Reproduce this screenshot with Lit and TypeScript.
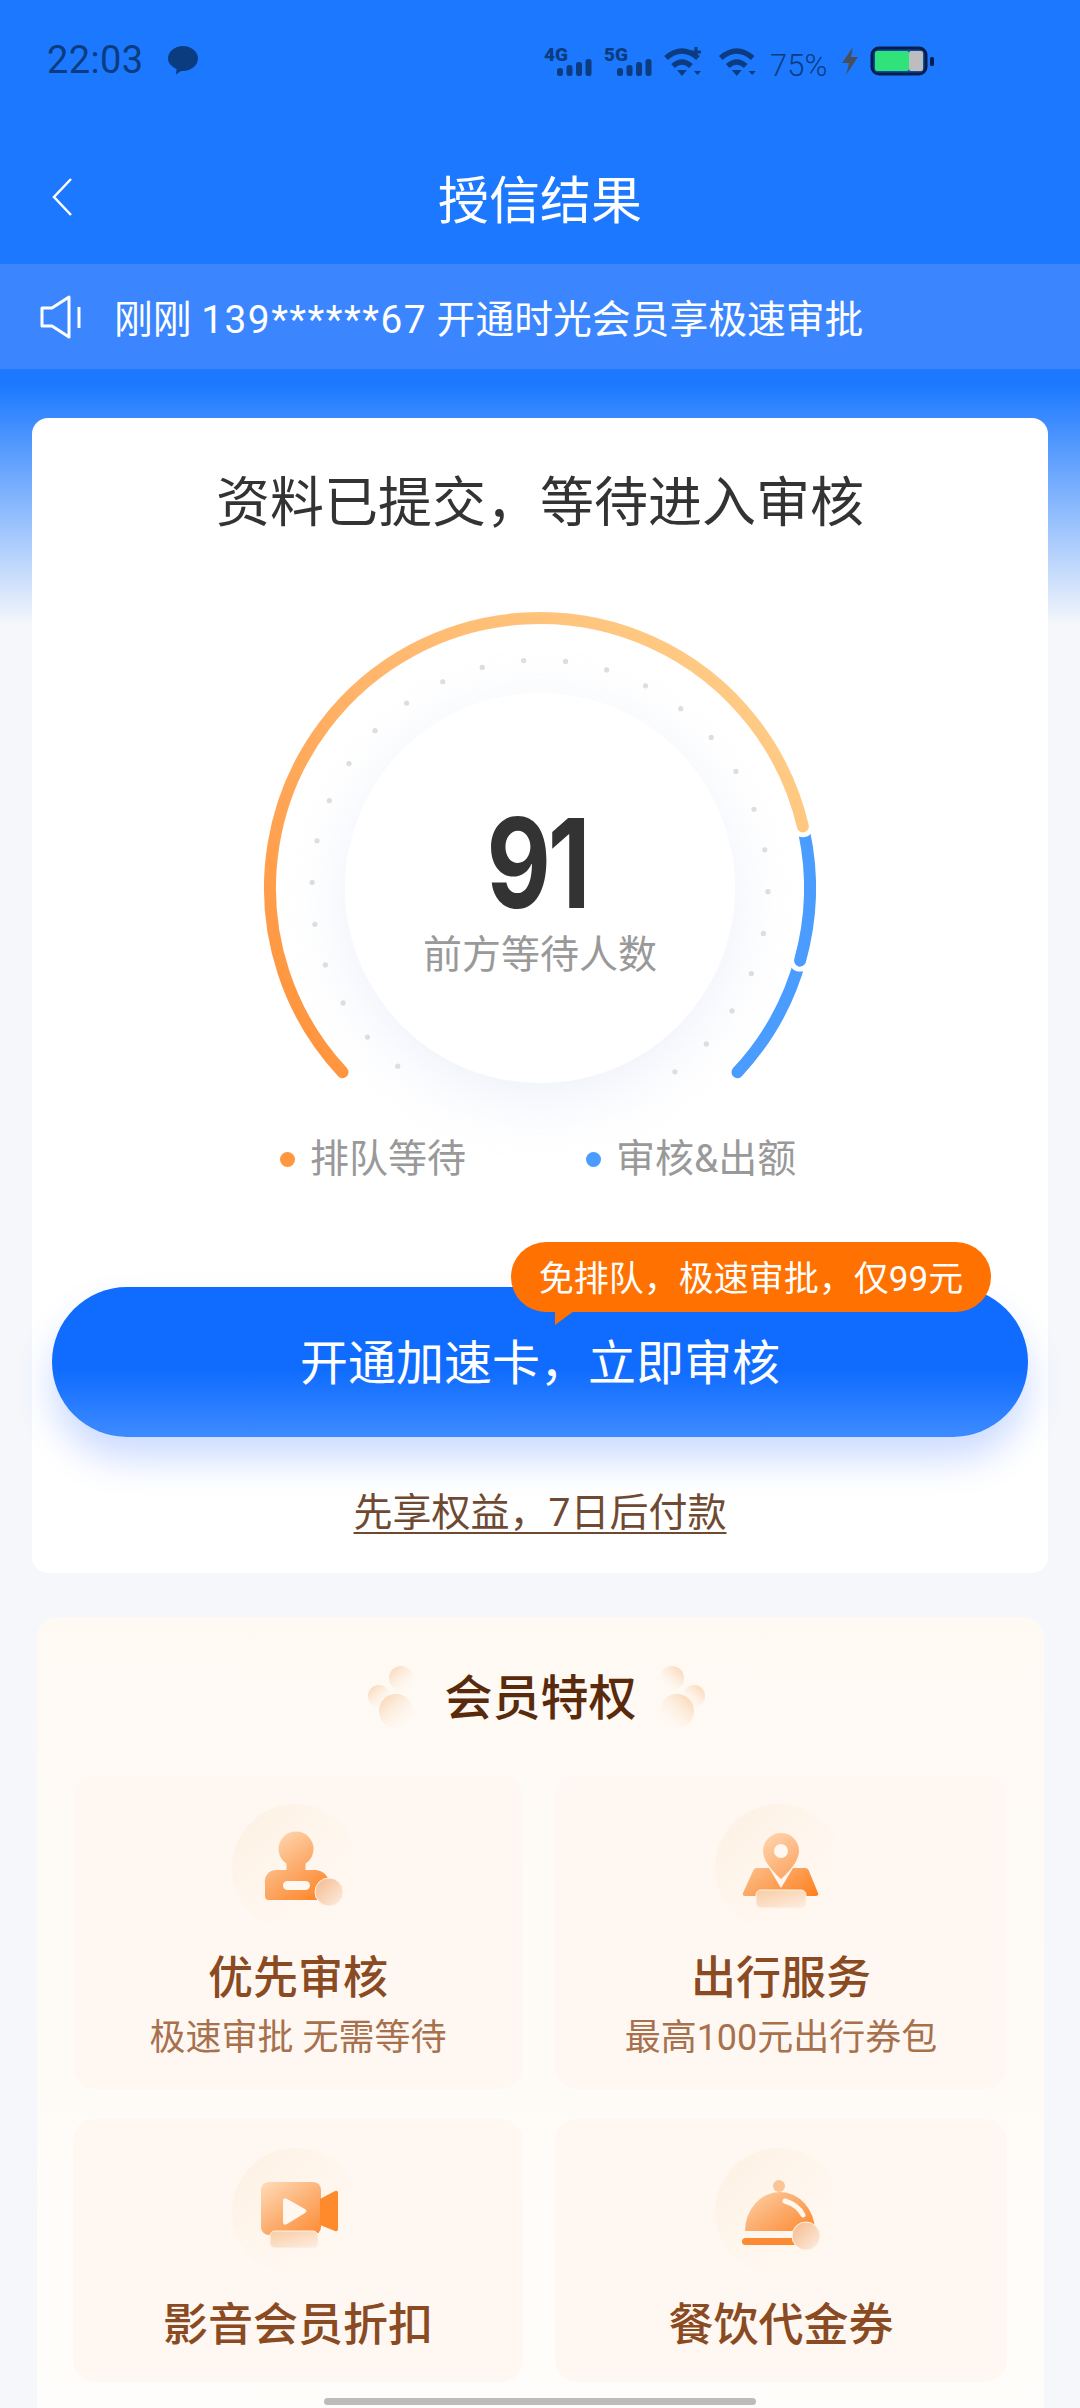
import { LitElement, html, css, svg } from "lit";
import { customElement } from "lit/decorators.js";

const CX = 280, CY = 280;
const pt = (r: number, deg: number) => {
  const a = (deg * Math.PI) / 180;
  return [CX + r * Math.sin(a), CY - r * Math.cos(a)];
};
const arc = (from: number, to: number, r = 270) => {
  const [x1, y1] = pt(r, from);
  const [x2, y2] = pt(r, to);
  return `M${x1.toFixed(2)} ${y1.toFixed(2)}A${r} ${r} 0 ${to - from > 180 ? 1 : 0} 1 ${x2.toFixed(2)} ${y2.toFixed(2)}`;
};
const dots = Array.from({ length: 28 }, (_, i) => pt(228, -141.4 + i * 10.56));

const grads = (p: string) => svg`
  <defs>
    <linearGradient id="${p}a" gradientUnits="userSpaceOnUse" x1="42" y1="28" x2="92" y2="100">
      <stop offset="0" stop-color="#ffd9b4"/><stop offset="0.45" stop-color="#fcae70"/><stop offset="1" stop-color="#ff7f1c"/>
    </linearGradient>
    <linearGradient id="${p}b" x1="0" y1="0" x2="1" y2="1">
      <stop offset="0" stop-color="#f5b98a"/><stop offset="1" stop-color="#fdeee2"/>
    </linearGradient>
    <linearGradient id="${p}c" x1="0.2" y1="0" x2="0.9" y2="1">
      <stop offset="0" stop-color="#f9cfa8"/><stop offset="1" stop-color="#fdece0"/>
    </linearGradient>
    <linearGradient id="${p}g" x1="0" y1="0" x2="1" y2="1">
      <stop offset="0" stop-color="#fdf0e1"/><stop offset="1" stop-color="#fff8f1" stop-opacity="0"/>
    </linearGradient>
  </defs>
  <circle cx="64" cy="64" r="64" fill="url(#${p}g)"/>`;

const personIcon = html`<svg class="ico" viewBox="0 0 128 128">${grads("p")}
  <circle cx="64" cy="45" r="17.5" fill="url(#pa)"/>
  <rect x="54.500" y="56" width="19" height="16" fill="url(#pa)"/>
  <path d="M33 79a11 11 0 0 1 11-13h40a14 14 0 0 1 13 13v17H37a4 4 0 0 1-4-4z" fill="url(#pa)"/>
  <rect x="51" y="77" width="27" height="9" rx="4.5" fill="#fff8f1"/>
  <circle cx="97" cy="88" r="14" fill="url(#pb)" stroke="#fff3e8" stroke-width="1"/>
</svg>`;

const pinIcon = html`<svg class="ico" viewBox="0 0 128 128">${grads("m")}
  <path d="M42 64h12l12 20 12-20h12q3 0 4 3l9 22q1 3-2 3H30q-3 0-2-3l10-22q1-3 4-3z" fill="url(#ma)"/>
  <path d="M66 29a18 18 0 0 1 18 18c0 10-11 22-18 28-7-6-18-18-18-28a18 18 0 0 1 18-18z" fill="url(#ma)" opacity="0.9"/>
  <circle cx="66" cy="47" r="7" fill="#fff8f1"/>
  <rect x="41" y="86" width="50" height="18" rx="5" fill="url(#mc)" stroke="#fff3e8" stroke-width="1"/>
</svg>`;

const videoIcon = html`<svg class="ico" viewBox="0 0 128 128">${grads("v")}
  <rect x="29" y="34" width="60" height="53" rx="8" fill="url(#va)"/>
  <path d="M88 51l15-8q3-1 3 2v36q0 3-3 2l-15-6z" fill="#ff8a2c"/>
  <path d="M51 53q0-4 4-2l18 10q3 2 0 4L55 76q-4 2-4-2z" fill="#fff8f1"/>
  <rect x="38" y="83" width="48" height="17" rx="5" fill="url(#vc)" stroke="#fff3e8" stroke-width="1"/>
</svg>`;

const clocheIcon = html`<svg class="ico" viewBox="0 0 128 128">${grads("c")}
  <circle cx="64" cy="38" r="6" fill="#fbc596"/>
  <path d="M30 83a35 39 0 0 1 70 0z" fill="url(#ca)"/>
  <path d="M70 53q13 4 18 14" fill="none" stroke="#fff8f1" stroke-width="5" stroke-linecap="round"/>
  <rect x="27" y="90" width="60" height="7" rx="3.5" fill="#fb8a33"/>
  <circle cx="91" cy="88" r="14" fill="url(#cb)" stroke="#fff3e8" stroke-width="1"/>
</svg>`;

const flank = (id: string, cls: string) => html`<svg class="flank ${cls}" viewBox="0 0 48 64">
  <defs>
    <linearGradient id="${id}" x1="0.1" y1="0.1" x2="0.85" y2="0.95">
      <stop offset="0" stop-color="#fbd7b6"/><stop offset="1" stop-color="#fef8f1" stop-opacity="0"/>
    </linearGradient>
  </defs>
  <circle cx="34" cy="13" r="12" fill="url(#${id})"/>
  <circle cx="12" cy="31" r="11" fill="url(#${id})"/>
  <circle cx="29" cy="46" r="17" fill="url(#${id})"/>
</svg>`;

const wifi = (dx: number) => svg`
  <g transform="translate(${dx} 0)" fill="none" stroke="#0b3c80" stroke-width="5.500">
    <path d="M125 14Q141 0 157 14"/>
    <path d="M132 22Q141 14 150 22"/>
    <path d="M136 26h10l-5 6z" fill="#0b3c80" stroke="none"/>
    <path d="M153 27h7l-3.500 4z" fill="#0b3c80" stroke="none"/>
  </g>`;

const signal = (dx: number, label: string) => svg`
  <g transform="translate(${dx} 0)" fill="#0b3c80">
    <text x="3" y="17" class="net">${label}</text>
    <rect x="16" y="24" width="6" height="8" rx="2.5"/>
    <rect x="25.5" y="21" width="6" height="11" rx="2.5"/>
    <rect x="35" y="18" width="6" height="14" rx="2.5"/>
    <rect x="44.5" y="15" width="6" height="17" rx="2.5"/>
  </g>`;

@customElement("app-root")
export class AppRoot extends LitElement {
  static styles = css`
    :host {
      display: block;
      position: relative;
      width: 1080px;
      height: 2408px;
      overflow: hidden;
      background: linear-gradient(#1c79ff 0, #1c79ff 385px, #f5f7fb 625px);
      font-family: Roboto, "Noto Sans CJK SC", sans-serif;
      color: #333;
    }
    .status {
      height: 120px;
      display: flex;
      align-items: center;
      justify-content: space-between;
      padding: 0 144px 0 47px;
    }
    .time-wrap { display: flex; align-items: center; gap: 23px; }
    .time { font-size: 38px; font-weight: 400; color: #0b3c80; letter-spacing: 0.4px; }
    .bubble { width: 32px; height: 30px; display: block; }
    .sys { width: 395px; height: 34px; display: block; overflow: visible; margin-top: 1px; }
    .net { font-size: 19px; font-weight: 900; font-family: Roboto, sans-serif; }
    .pct { font-size: 31px; font-weight: 300; font-family: Roboto, sans-serif; fill: #0b3c80; }
    .nav {
      height: 144px;
      padding-top: 10px;
      box-sizing: border-box;
      display: flex;
      align-items: center;
      justify-content: center;
      position: relative;
      color: #fff;
      font-size: 51px;
    }
    .back { position: absolute; left: 50px; top: 57px; width: 24px; height: 40px; }
    .banner {
      height: 105px;
      background: #3b86ff;
      display: flex;
      align-items: center;
      padding-left: 40px;
      gap: 30px;
      color: #fff;
      font-size: 38.8px;
    }
    .banner > span { margin-top: -2px; }
    .lat { letter-spacing: 1.5px; }
    .spk { width: 44px; height: 46px; display: block; }
    .card {
      margin: 49px 32px 0;
      height: 1155px;
      background: #fff;
      border-radius: 16px;
      display: flex;
      flex-direction: column;
      align-items: center;
    }
    .card-title { margin-top: 58px; font-size: 54px; line-height: 56px; color: #333; }
    .gauge { position: relative; width: 560px; height: 500px; margin-top: 76px; }
    .gauge svg { position: absolute; inset: 0; width: 560px; height: 560px; overflow: visible; }
    .inner {
      position: absolute;
      left: 85px;
      top: 85px;
      width: 390px;
      height: 390px;
      border-radius: 50%;
      background: #fff;
      box-shadow: 0 16px 60px rgba(214, 224, 243, 0.45);
      display: flex;
      flex-direction: column;
      align-items: center;
      padding-top: 120px;
      box-sizing: border-box;
    }
    .num {
      font-family: Inter, Roboto, sans-serif;
      font-size: 124px;
      line-height: 100px;
      font-weight: 700;
      letter-spacing: -4px;
      transform: scaleX(0.8);
      margin-left: -6px;
      color: #333;
    }
    .num-label { margin-top: 17px; font-size: 39px; line-height: 50px; color: #999; }
    .legend {
      margin-top: 27px;
      display: flex;
      width: 520px;
      font-size: 39px;
      line-height: 48px;
      color: #999;
    }
    .leg { display: flex; align-items: center; gap: 15px; }
    .leg.one { width: 306px; }
    .dot { width: 15px; height: 15px; border-radius: 50%; }
    .dot.o { background: #ff9640; }
    .dot.b { background: #4a9cff; }
    .cta {
      margin-top: 104px;
      position: relative;
      width: 976px;
      height: 150px;
      flex: none;
      border-radius: 75px;
      background: linear-gradient(#0f6cff 0, #0f6cff 55%, #3e8bff 100%);
      box-shadow: 0 22px 36px rgba(40, 105, 255, 0.24);
      display: flex;
      align-items: center;
      justify-content: center;
      color: #fff;
      font-size: 48px;
      padding-bottom: 6px;
      box-sizing: border-box;
    }
    .tip {
      position: absolute;
      left: 459px;
      top: -45px;
      width: 480px;
      height: 70px;
      border-radius: 35px;
      background: #ff7100;
      display: flex;
      align-items: center;
      justify-content: center;
      font-size: 35px;
      color: #fff;
      padding-bottom: 3px;
      box-sizing: border-box;
    }
    .tip::after {
      content: "";
      position: absolute;
      left: 44px;
      top: 69px;
      width: 19px;
      height: 14px;
      background: #ff7100;
      clip-path: polygon(0 0, 100% 0, 0 100%);
    }
    .link {
      margin-top: 51px;
      font-size: 39px;
      line-height: 50px;
      color: #6f4a33;
      text-decoration: underline;
      text-underline-offset: 6px;
      text-decoration-thickness: 2px;
    }
    .perks {
      margin: 44px 36px 0 37px;
      height: 820px;
      border-radius: 20px;
      background: linear-gradient(#fef9f3, #fffdfb);
      padding: 50px 36px 0;
      box-sizing: border-box;
    }
    .perks-title {
      display: flex;
      align-items: center;
      justify-content: center;
      gap: 29px;
      height: 60px;
      font-size: 48px;
      font-weight: 500;
      color: #5a2a0c;
    }
    .perks-title span { margin-top: -6px; }
    .flank { width: 48px; height: 64px; display: block; }
    .flank.r { transform: translateX(-8px) scaleX(-1); }
    .grid {
      margin-top: 48px;
      display: grid;
      grid-template-columns: 450px 452px;
      grid-template-rows: 314px 263px;
      column-gap: 32px;
      row-gap: 30px;
    }
    .item {
      border-radius: 22px;
      background: #fff8f2;
      display: flex;
      flex-direction: column;
      align-items: center;
      padding-top: 29px;
      box-sizing: border-box;
    }
    .ico { width: 128px; height: 128px; display: block; flex: none; margin-left: -4px; }
    .item-t { margin-top: 17px; font-size: 45px; line-height: 60px; font-weight: 500; color: #8a4a22; }
    .item-t.low { margin-top: 20px; }
    .item-s { margin-top: 4px; font-size: 36px; line-height: 50px; color: #a8714d; }
    .home {
      position: absolute;
      left: 324px;
      bottom: 3px;
      width: 432px;
      height: 7px;
      border-radius: 4px;
      background: #bcbcbc;
    }
  `;

  render() {
    return html`
      <div class="status">
        <div class="time-wrap">
          <span class="time">22:03</span>
          <svg class="bubble" viewBox="0 0 32 30">
            <path d="M16 1c8.300 0 15 5.600 15 12.500S24.300 26 16 26q-1 0-2-.1L9 29.500l.6-5.500C3.800 21.300 1 17.700 1 13.500 1 6.600 7.700 1 16 1z" fill="#0b3c80"/>
          </svg>
        </div>
        <svg class="sys" viewBox="0 0 395 34">
          ${signal(0, "4G")}${signal(60, "5G")}${wifi(0)}
          <path d="M150 8h10M155 3v10" stroke="#0b3c80" stroke-width="3" fill="none"/>
          ${wifi(54.7)}
          <text x="229" y="32" class="pct">75%</text>
          <path d="M312 3L301 19h7l-3 12 12-18h-7z" fill="#46505c"/>
          <rect x="331" y="4" width="54" height="26" rx="7" fill="#0c4ea8" stroke="#081e4a" stroke-width="3"/>
          <rect x="334" y="7" width="34" height="20" rx="2" fill="#2fe27a"/>
          <rect x="368" y="7" width="14" height="20" rx="2" fill="#bdbdbd"/>
          <rect x="389" y="13" width="4" height="9" rx="1.500" fill="#081e4a"/>
        </svg>
      </div>
      <div class="nav">
        <svg class="back" viewBox="0 0 24 40">
          <path d="M21 2L4 20l17 18" fill="none" stroke="#fff" stroke-width="2.500"/>
        </svg>
        授信结果
      </div>
      <div class="banner">
        <svg class="spk" viewBox="0 0 44 46">
          <path d="M2 14h10L29 3v40L12 32H2z" fill="none" stroke="#fff" stroke-width="3" stroke-linejoin="round"/>
          <path d="M39 13v21" stroke="#fff" stroke-width="3" fill="none"/>
        </svg>
        <span>刚刚 <span class="lat">139******67</span> 开通时光会员享极速审批</span>
      </div>
      <div class="card">
        <div class="card-title">资料已提交，等待进入审核</div>
        <div class="gauge">
          <svg viewBox="0 0 560 560">
            <defs>
              <linearGradient id="og" gradientUnits="userSpaceOnUse" x1="60" y1="470" x2="500" y2="100">
                <stop offset="0" stop-color="#ff933c"/>
                <stop offset="0.5" stop-color="#ffb56b"/>
                <stop offset="1" stop-color="#ffcb85"/>
              </linearGradient>
            </defs>
            ${dots.map(([x, y]) => svg`<circle cx="${x}" cy="${y}" r="2.600" fill="#dedede"/>`)}
            <path d="${arc(105, 133)}" fill="none" stroke="#4a9cff" stroke-width="12" stroke-linecap="round"/>
            <circle cx="${pt(270, 105.6)[0]}" cy="${pt(270, 105.6)[1]}" r="11" fill="#fff"/>
            <path d="${arc(78, 105.6)}" fill="none" stroke="#4a9cff" stroke-width="12" stroke-linecap="round"/>
            <circle cx="${pt(270, 76.8)[0]}" cy="${pt(270, 76.8)[1]}" r="11" fill="#fff"/>
            <path d="${arc(-133, 76.8)}" fill="none" stroke="url(#og)" stroke-width="12" stroke-linecap="round"/>
          </svg>
          <div class="inner">
            <div class="num">91</div>
            <div class="num-label">前方等待人数</div>
          </div>
        </div>
        <div class="legend">
          <div class="leg one"><span class="dot o"></span>排队等待</div>
          <div class="leg"><span class="dot b"></span>审核&amp;出额</div>
        </div>
        <div class="cta">
          开通加速卡，立即审核
          <div class="tip">免排队，极速审批，仅99元</div>
        </div>
        <div class="link">先享权益，7日后付款</div>
      </div>
      <div class="perks">
        <div class="perks-title">
          ${flank("fl", "l")}<span>会员特权</span>${flank("fr", "r")}
        </div>
        <div class="grid">
          <div class="item">${personIcon}<div class="item-t">优先审核</div><div class="item-s">极速审批 无需等待</div></div>
          <div class="item">${pinIcon}<div class="item-t">出行服务</div><div class="item-s">最高100元出行券包</div></div>
          <div class="item">${videoIcon}<div class="item-t low">影音会员折扣</div></div>
          <div class="item">${clocheIcon}<div class="item-t low">餐饮代金券</div></div>
        </div>
      </div>
      <div class="home"></div>
    `;
  }
}
